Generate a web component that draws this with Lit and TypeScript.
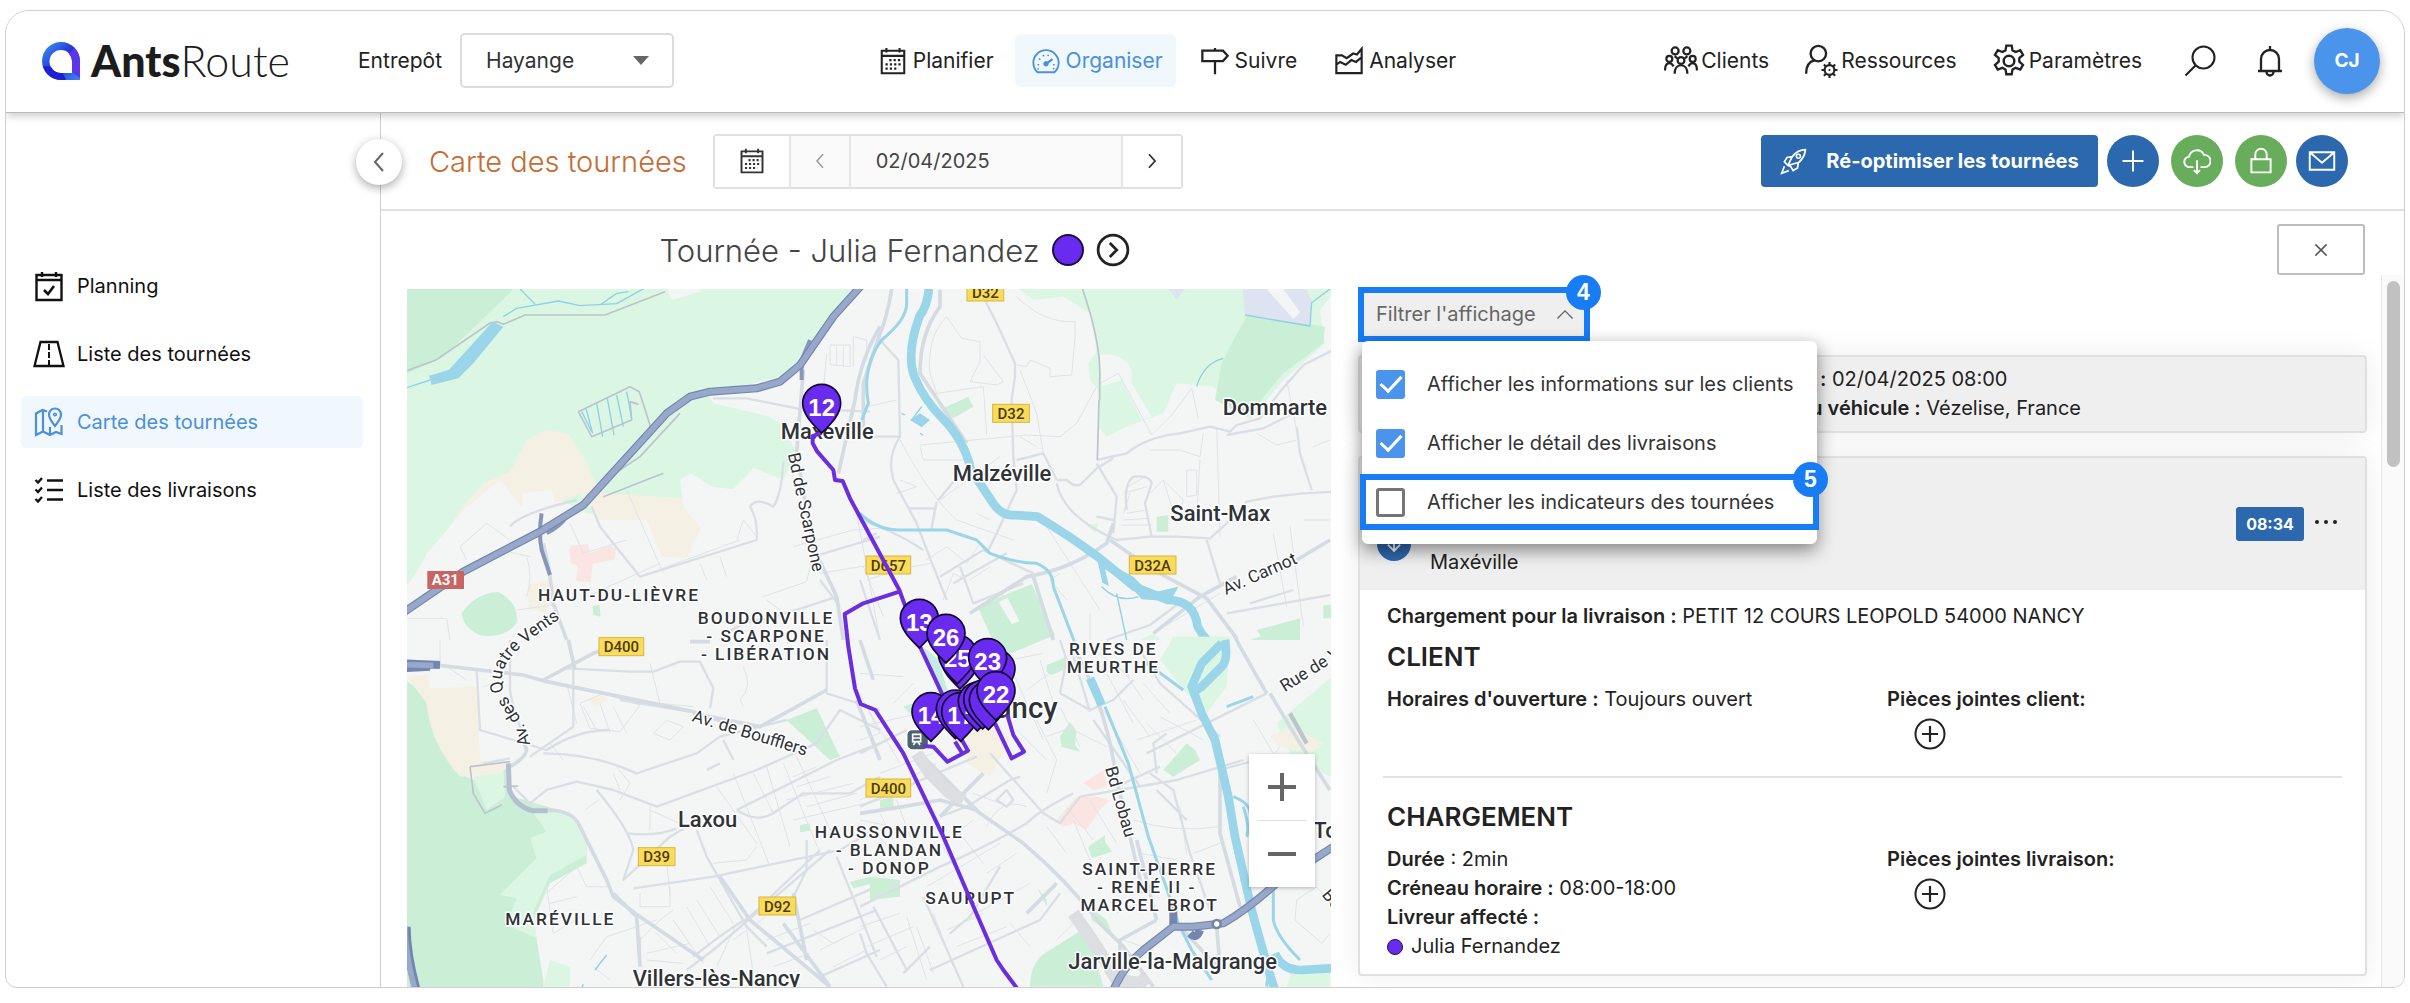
import { LitElement, html, svg, css } from "lit";
import { customElement, property } from "lit/decorators.js";

const ICONS: Record<string, unknown> = {
  calendar: svg`<path d="M4 5h24v24H4zM4 10.500h24M9 2v5M23 2v5" stroke-width="2.200"/><path d="M12 15h14M8 19.500h18M8 24h14" stroke-dasharray="2.400 2.200" stroke-width="2.400"/>`,
  gauge: svg`<path d="M7 28a13.500 13.500 0 1 1 18 0z" stroke-width="2"/><circle cx="16" cy="19" r="2.400" fill="currentColor"/><path d="M16 19l7-5" stroke-width="2.400"/><path d="M7 20h1.800M8.500 13.500l1.500 1M13 9.500l.6 1.500M18.500 9.300l-.4 1.500M23.500 20h1.800M6.800 24.500l1.600-.5M25 24.500l-1.600-.5" stroke-width="1.800"/>`,
  sign: svg`<path d="M16 2v3M16 16v14M2.500 5h22l5 5.500-5 5.500h-22z" stroke-width="2.400"/>`,
  chart: svg`<path d="M2.500 10v19h27V3l-5 6-4-1-7 5-5-3zM2.500 20l4-3 6 3 6-5 5 2 6-5" stroke-width="2.300"/>`,
  clients: svg`<g stroke-width="2.100"><circle cx="10.500" cy="6.500" r="3.300"/><circle cx="21.500" cy="6.500" r="3.300"/><circle cx="5" cy="14" r="2.800"/><circle cx="16" cy="15.500" r="3.200"/><circle cx="27" cy="14" r="2.800"/><path d="M1 25c0-4 1.500-7 4-7s3 1.500 4 3M23 21c1-1.500 1.500-3 4-3s4 3 4 7M10 28c0-5 2.500-8 6-8s6 3 6 8M10 11.500l2.500 2M22 11.500l-2.500 2"/></g>`,
  userGear: svg`<circle cx="13.500" cy="9" r="7.300" stroke-width="2.200"/><path d="M2 28c0-7 3-11.500 8-12.500" stroke-width="2.200"/><circle cx="24" cy="24.500" r="4.600" stroke-width="2"/><circle cx="24" cy="24.500" r="1" fill="currentColor" stroke="none"/><path d="M24 17v3M24 29v3M16.500 24.500h3M28.500 24.500h3M18.700 19.200l2.100 2.100M27.200 27.700l2.100 2.100M18.700 29.800l2.100-2.100M27.200 21.300l2.100-2.100" stroke-width="2"/>`,
  gear: svg`<circle cx="16" cy="16" r="5" stroke-width="2.300"/><path d="M13.500 1.500h5l.8 4.500 3 1.600 4.300-1.700 2.600 4.400-3.500 3v3.400l3.500 3-2.600 4.400-4.300-1.700-3 1.600-.8 4.500h-5l-.8-4.500-3-1.600-4.300 1.700-2.600-4.400 3.500-3v-3.400l-3.500-3 2.600-4.400L9.700 7.600l3-1.600z" stroke-width="2.200"/>`,
  search: svg`<circle cx="19.500" cy="12.500" r="11" stroke-width="2.100"/><path d="M11.500 20.500L1.500 30.500" stroke-width="2.200"/>`,
  bell: svg`<path d="M4 26h24M7 26V14a9 9 0 0 1 18 0v12M16 1v4M12.500 27a3.500 3.500 0 0 0 7 0" stroke-width="2.300"/>`,
  calCheck: svg`<path d="M3.500 5h25v25h-25zM3.500 10h25M9 2v5M23 2v5" stroke-width="2.400"/><path d="M11 20l4 4 6-8" stroke-width="2.600"/>`,
  road: svg`<path d="M7.500 4h17l6 24h-29z" stroke-width="2.300"/><path d="M16 6v6M16 14v6M16 22v5" stroke-width="2"/>`,
  map: svg`<path d="M14 5.500L9.500 4 3 7.500V29l7-3.500 7 3.500 6-3 5.500 2V19M10 5v20M17 21v8" stroke-width="2.200"/><path d="M22 20c-4-5-6-8-6-11.500a6 6 0 0 1 12 0C28 12 26 15 22 20z" stroke-width="2.200"/><circle cx="22" cy="8.500" r="1.300" stroke-width="1.600"/>`,
  checklist: svg`<path d="M14 6.500h16M14 16h16M14 25.500h16" stroke-width="2.400"/><path d="M2.500 6l2.500 2.500L9 4M2.500 15.500L5 18l4-4.500M2.500 25L5 27.500 9 23" stroke-width="2.300"/>`,
  left: svg`<path d="M20 7l-8 9 8 9" stroke-width="2"/>`,
  right: svg`<path d="M12 7l8 9-8 9" stroke-width="2.400"/>`,
  up: svg`<path d="M5 21L16 10l11 11" stroke-width="2"/>`,
  close: svg`<path d="M6 6l20 20M26 6L6 26" stroke-width="2.600"/>`,
  plus: svg`<path d="M16 4v24M4 16h24" stroke-width="2.200"/>`,
  rocket: svg`<path d="M9 21l-4-4 3-5 6-1c4-5 9-8 15-8-.5 6-3 11-8 15l-1 6-5 3-3-5zM14 11l-5 10M20 18L9 21M5 22l-3 8 8-3" stroke-width="2"/><circle cx="21" cy="10.500" r="2.300" stroke-width="1.800"/>`,
  cloud: svg`<path d="M12 23H8a6 6 0 0 1-1-12 9 9 0 0 1 17-2 7 7 0 0 1 1 14h-5M16 15v15M12.500 26.500L16 30l3.500-3.500" stroke-width="2.200"/>`,
  lock: svg`<path d="M5 14h22v15H5zM9.500 14V8.500a6.500 6.500 0 0 1 13 0V14" stroke-width="2.200"/>`,
  mail: svg`<path d="M2 6h28v20H2zM2 6l14 12L30 6" stroke-width="2.200"/>`,
  down: svg`<path d="M16 5v20M7 17l9 9 9-9" stroke-width="2.600"/>`,
  next: svg`<circle cx="16" cy="16" r="14" stroke-width="2.600"/><path d="M13 9.500l6.500 6.500-6.500 6.500" stroke-width="2.600"/>`,
  add: svg`<circle cx="16" cy="16" r="14.500" stroke-width="2"/><path d="M16 8v16M8 16h16" stroke-width="2.200"/>`,
};

@customElement("ar-icon")
export class ArIcon extends LitElement {
  @property() name = "plus";
  static styles = css`
    :host { display: inline-flex; width: 32px; height: 32px; flex: none; }
    .glyph { width: 100%; height: 100%; fill: none; stroke: currentColor; }
  `;
  render() {
    return html`<svg class="glyph" viewBox="0 0 32 32" aria-hidden="true">${ICONS[this.name]}</svg>`;
  }
}

interface Pin { x: number; y: number; n: string }

const PINS: Pin[] = [
  { x: 408, y: 86, n: "" }, { x: 300, y: 58, n: "" },
  { x: 292, y: 42, n: "25" }, { x: 178, y: -65, n: "13" }, { x: 258, y: -20, n: "26" }, { x: 383, y: 53, n: "23" },
  { x: 213, y: 215, n: "14" }, { x: 286, y: 207, n: "" }, { x: 302, y: 215, n: "17" },
  { x: 352, y: 184, n: "18" }, { x: 368, y: 178, n: "" }, { x: 385, y: 180, n: "" },
  { x: 408, y: 152, n: "22" },
];

const pin = (p: Pin) => svg`
  <path class="pin" d="M${p.x} ${p.y + 89}C${p.x - 16} ${p.y + 72} ${p.x - 57} ${p.y + 38} ${p.x - 57} ${p.y}a57 57 0 0 1 114 0C${p.x + 57} ${p.y + 38} ${p.x + 16} ${p.y + 72} ${p.x} ${p.y + 89}z"/>
  <text class="pinNo" x=${p.x} y=${p.y + 38}>${p.n}</text>`;

const shield = (x: number, y: number, t: string, w = 110) => svg`
  <rect class="shield" x=${x - w / 2} y=${y - 27} width=${w} height="54"/>
  <text class="road-no" x=${x} y=${y + 17}>${t}</text>`;

@customElement("tour-map")
export class TourMap extends LitElement {
  static styles = css`
    :host { display: block; position: relative; overflow: hidden; min-height: 0; background: #f4f5f5; }
    .canvas { position: absolute; inset: 0; width: 100%; height: 100%; font-family: Roboto, "Liberation Sans", sans-serif; }
    .g1 { fill: #dbf7e4; } .g2 { fill: #cbeed7; } .bare { fill: #f4f5f5; }
    .sand { fill: #f5f0e4; } .rose { fill: #fbe5e2; } .lilac { fill: #dde3f1; }
    .water { fill: #9ad5e9; }
    .w1, .w2, .w3, .r1, .r2, .r3, .grey, .hwo, .hw, .ramp, .way { fill: none; stroke-linejoin: round; }
    .w1 { stroke: #9ad5e9; stroke-width: 26; } .w2 { stroke: #9ad5e9; stroke-width: 9; } .w3 { stroke: #8fd0e6; stroke-width: 4; }
    .r1 { stroke: #d4dbe2; stroke-width: 11; } .r2 { stroke: #d9dfe4; stroke-width: 7; } .r3 { stroke: #dfe3e7; stroke-width: 3; }
    .grey { stroke: #bdc3cc; stroke-width: 5; }
    .hwo { stroke: #7486ad; stroke-width: 24; } .hw { stroke: #98a8cb; stroke-width: 17; }
    .ramp { stroke: #8797bb; stroke-width: 12; }
    .way { stroke: #6a2ee0; stroke-width: 12; }
    text { fill: #2f3338; stroke: #fff; stroke-width: 9; paint-order: stroke; stroke-linejoin: round; }
    .city { font-size: 66px; font-weight: 500; }
    .big { font-size: 88px; font-weight: 500; }
    .zone { font-size: 52px; font-weight: 500; letter-spacing: 6px; text-anchor: middle; }
    .street { font-size: 52px; }
    .shield { fill: #fadb5a; stroke: #d7b641; stroke-width: 3; }
    .road-no { font-size: 45px; font-weight: 500; text-anchor: middle; stroke: none; fill: #4a3d10; }
    .a31 { fill: #c96464; }
    .a31t { stroke: none; fill: #fff; font-size: 45px; font-weight: 700; text-anchor: middle; }
    .pin { fill: #6a2bf0; stroke: #12052e; stroke-width: 5; }
    .pinNo { font: 700 72px "Liberation Sans", Arial, sans-serif; fill: #fff; stroke: none; text-anchor: middle; }
    .rail { fill: #4d6372; stroke: #fff; stroke-width: 5; }
    .zoom { position: absolute; right: 16px; bottom: 100px; width: 66px; display: flex; flex-direction: column; align-items: center; background: #fff; box-shadow: 0 1px 4px #0004; }
    .zoom button { border: 0; background: none; width: 66px; height: 66px; padding: 0; color: #666; display: flex; align-items: center; justify-content: center; cursor: pointer; }
    .zoom svg { width: 28px; height: 28px; stroke: currentColor; stroke-width: 4; }
    .sep { width: 50px; height: 1px; background: #e2e2e2; }
  `;

  private northWest() {
    return svg`<g transform="translate(-7 -9) scale(0.33333)">
      <path class="g1" d="M0 0H1385L1190 250 1130 295 920 340 940 370 1110 410 1150 440 1190 520 1150 600 1060 565 1010 645 860 655 800 750 700 700 560 700 400 620 280 610 80 820 60 870 0 940z"/>
      <path class="g2" d="M0 0H370L130 230 0 290z"/>
      <path class="bare" d="M790 0H900V35L815 60z"/>
      <path class="sand" d="M0 970L180 690 250 610 330 575 380 480 440 450 505 460 555 540 600 640 860 655 1010 645 940 625 880 690 905 740 860 835 785 830 740 720 600 720 540 640 330 720 140 860 0 990z"/>
      <path class="bare" d="M300 600L365 680 370 640 455 630 470 690 330 740 200 860 0 1000V960L80 825 190 690z"/>
      <path class="bare" d="M840 600L875 580 935 620 1000 628 1060 565 1150 600 1060 680 900 740 850 680z"/>
      <path class="g2" d="M185 1000q40-60 110-64q60 30 56 90q-30 50-110 40q-50-20-56-66z"/>
      <path class="g2" d="M578 978l20-4 4 36-22-6z"/><path class="rose" d="M508 798l56-6 6 28 60-26 18 14-4 30-66 14-6 54-44-4 6-44-22-10z"/>
      <path class="sand" d="M384 915l62-16 10 60-20 40-50-16z"/>
      <g class="r3"><path d="M1290 195h60v65l-60-6zM1310 200v55M1330 200v60M1360 260v-90l40 10v60M1270 330l10-110M1180 800l180-50 80-5M1240 800l20 80 180-30M1370 700l70 380"/>
        <path d="M680 630l110 250M780 850L560 950M510 730l40 90 130-40M260 730l70 50M180 800l80-70M180 800l20 40M20 1015h120l10 65M380 830q20 60 0 120M300 810l90 20M720 890l300-110M900 850l20 50M960 830l20 60M1010 780l20-60 40 50M1090 950l130-45 30-130M1100 960l80 60M350 990l110-15"/></g>
      <g class="r2"><path d="M940 355h100l150 30 220 10M1150 545q-5 100-30 135-50-30-70 0 25 40 20 100L720 890 600 740 575 680M330 740q30-40 200-80M1440 770l-200 60M1260 900l60 80M960 1080q60-60 130-60l130-40M1220 980l90-30"/></g>
      <g class="r1"><path d="M1210 270l-20 250 50 280 70 150 20 130M1440 140q-60 100-75 220l-50 220M430 790q20 80 30 180l40 110"/></g>
      <g class="grey"><path d="M20 272l90-33 160-110 22-4 18 8 65-28h240l180-70M535 395l155-75 28 15 35 110M535 395l40 75 120-50-5-55 25 8M660 570l60-40 120-130M610 650l180-70"/></g>
      <path class="water" d="M278 125l32 15-90 110-45 45-80 20-8-28 60-18z"/>
      <g class="w3"><path d="M0 330l90-30M310 110l40-25 125-22 65 14 110-6 90-50M360 27l45 45M600 75l50-35 35-5"/><path d="M558 385l20 75M590 370l18 100M622 355l20 110M650 345l20 95M680 335l15 80M545 395l30 60"/></g>
      <path class="ramp" d="M425 700q-10 60 0 110l25 75M440 760q40-20 60-50M1205 300v-60l25-60"/>
      <path class="hwo" d="M0 1005l190-130 230-120 130-80L800 400l70-50 60-15 140-10 70-20 60-50L1300 110l90-100"/>
      <path class="hw" d="M0 1005l190-130 230-120 130-80L800 400l70-50 60-15 140-10 70-20 60-50L1300 110l90-100"/>
    </g>`;
  }

  private northEast() {
    return svg`<g transform="translate(453 -9) scale(0.33333)">
      <path class="g1" d="M440 0H1420V40L1380 90 1395 190 1270 300 1170 420 1060 320 950 310 910 400 800 440 740 470 715 440V330L690 300 685 250 710 215 690 100 610 50 520 60z"/>
      <path class="bare" d="M720 225q70-10 95 45v40l60 100-30 10-60-120-60 20z"/>
      <path class="g2" d="M1165 100l230 40-5 50-120 90-110 130-95-50 20-110 30-60z"/>
      <path class="lilac" d="M1145 0h180l30 60-5 78-195-35zM920 20h60l-30 40z"/><path class="bare" d="M1220 27h50l50 70-20 20z"/>
      <path class="g2" d="M250 385l75-35 15 30-60 35zM352 978l163-65 70 152-145 60-40-40zM890 710l35-5v50h-35zM1190 1050l130-35v65h-110zM1390 975h25v40h-25z"/>
      <path class="bare" d="M415 965l28-12 35 70-22 10z"/><path class="g1" d="M680 735l35-5-10 30zM840 1080l40-20 20 20z"/>
      <g class="r3"><path d="M260 110q-60 60-50 170l20 60 140-20 10 145M260 110l45 65 55 10v60l-30 60 80 10 20-10-60-80M470 50q80 80 175 75v50l-10 110-65 5v-25l-60-25-10 20-30-5M180 495l320-30 100 5 50-40 60-110M720 310l55-30 60 110 40 75 60-60 60-80 20 90M480 270l50 130 20 120M530 500l-50-30M870 510h90l60 20 10-70M870 640l40-40 60 60-20 70-40-130M980 570v80l30-5v-75z"/>
        <path d="M20 380l90-20M120 480q90 170 170 240l170 60M180 500l10 40h120M120 600l50 20-60 20M350 700l40 20M240 660l180-130M800 700l60-10M790 720l80-5M785 735l90 0M790 640l70-20M805 620l50-30M790 700l20-60M1070 440l10 330M1020 540l-10 170M1240 760l40 220M1290 740l40 300M1330 720h80M1360 500l50-20M1280 300l30 150M1190 460l60 35 60-15"/>
        <path d="M20 900l130-40M10 860l60 150M60 880l150-30M100 900l30 60M400 1000l40-80M620 960l-50-60 30-20M690 1000v80M880 1060l200-120M560 740l160 250M250 960l30-80 40 20M200 840l60-40 60 50 40-60M330 900l60-40"/></g>
      <g class="r2"><path d="M375 60l40 80 50 110v40l-10 70 5 170 10 100-60 130-30 60M60 180l55 60 5 230q-40 60-20 130l70 130 50 130 40 100M10 470h110M235 660l50-60M145 685h80l-10 60 15-80M590 600l30 0 20 15h20l50-50 50-30M590 610q20 100 180 170l100-10h80l100 5q60-50 110-110l80-15 90-10 100-5M710 540l90-20q60-50 160-60l90-20 60 15 20-20 70-20 60-80 70-80 100-50M1100 465l110-20 80-40M1040 780l40 130M1310 440l10 80 35 110M470 540l80-20 40 80M800 690q-10-80 20-100 50-5 55 20l-20 60 20 100M710 710l50 10M710 550l60 100-10 110"/>
        <path d="M10 780l40-20M0 720q100 30 190 90M240 890l130-80 150 70M0 900l60 180M280 910l160-90M300 860l40 110 150-60M1100 1000l310-55M1170 970l130-40M740 1080l130-45 80-60"/></g>
      <g class="r1"><path d="M240 30v50q-60 80-60 200l140 210M100 0q-20 120-40 160L10 310v150M330 1000l170-110q130-20 240-100l20-60M750 780l130 90 160 85 90 120M880 1060l140-110 110-60M1310 840l100-60M520 890l60 190"/></g>
      <path class="grey" d="M665 20q60 170 54 280v60M712 540l5-180"/>
      <path class="w1" d="M208 0q0 70-30 110-40 110-15 180 30 70 80 120 70 70 90 160l60 90q30 50 70 45l70 5q100 60 180 120l110 90 100 40q80 0 90 80 20 40 60 65"/>
      <path class="water" d="M710 830l110 60 50 50 85-20-20 38q-50 5-90 0-30-40-110-90l12 50-20-10z"/>
      <g class="w2"><path d="M140 0v70q0 50-75 110-60 80-40 190l-20 50M0 700q50 50 120 50l140 0 90 30 40 40q80 30 140 30 50 20 50 70l65 170"/></g>
      <g class="w3"><path d="M725 920q50 50 110 30M1010 320q20-70 80-85M1155 105l195 33 5-70 60-45M770 940l30 140M125 400l10 5M180 460l10 5M155 420l30-40"/></g>
      <path class="water" d="M150 420l30-20 30 20-25 22z"/>
    </g>`;
  }

  private southWest() {
    return svg`<g transform="translate(-7 351) scale(0.33333)">
      <path class="g2" d="M0 110l90 60 90 230 40 20 100-40 20 90 170 50 50 90v60l-110 60-50 110 30 180v30H0z"/>
      <path class="g1" d="M220 410l90-20 5 80-55 40zM400 520l110-5 50 90v40l-110 60-50 110 10 80-90-40 30-80-50-10 110-110-20-60 50-20zM430 1040l20-80 60 20v60z"/>
      <path class="sand" d="M20 110l90-10 120 40 10 220 90 15-30 25-120 10q-90-100-100-220z"/>
      <path class="g2" d="M1160 240l90-35 70 145-30 10zM1200 555l30-5v22l-30 5zM1350 725l60-15 10 20-60 15z"/>
      <path class="bare" d="M80 90l150 20v30l-140 5z"/><path class="sand" d="M565 180l40-15 20 15-40 20z"/>
      <g class="r3"><path d="M120 0v70M540 190l70-30 110 35-60 80-90-10zM550 200l40 70M600 190l30 90M640 200l40 80M760 280l40-40 50 20-40 40zM750 70l30 120 100 10M1030 80q30 60-10 100l10 20M250 140l30-10M500 130l30 120M450 310l40 50M650 380l40 50-30 50M555 510l40-30M640 400l20 50M950 440l120 170M1000 400l110 280M1060 400l60 120M1100 380l70 240M1150 370l110 270M1190 350l110 240M1180 410l70-30M1190 440l100-30M1160 480l200-50M1180 540l260-60M200 120l-60-40M1220 500l150-40"/>
        <path d="M440 760l90-80 30 60 60 0M450 790l80-20M440 740l20 140 100-60M570 960l50-70 150-50M580 980l50 40M720 900l60-60 40-30M740 940l130-30M740 960l110 10M770 880l60 60M820 840l90 130M860 800l70 120M890 780l70 110M930 740l70 110M720 760v40h90v-60M940 670l100-10 30-40M800 660l10 110M1000 900l40-30 20 130M950 980l60-130M1060 860l90-80M1100 900l130-50M1120 980l110-40M1240 870l60 40 100-50M1260 930l80-40M1300 980l100-50M750 500v70M750 510l110 50"/></g>
      <g class="r2"><path d="M230 90l10 180 200 60q90-60 190-60M520 80l0 180-130 90M330 0v150q10 70 50 160M500 85l190 10 70 0 80-30h60l40 80-10 60M590 450q100 120 110 180l-30 90 140-130 50-30M680 580q90 10 150-15M700 745l240-35 380-80 100-60M890 570l30 80 120 210 60 60M250 370l80-15M340 440l50 50 50-40 90-25 110 25 130 50 300-110 180-80 70-100 120 60M660 180l240 40M430 340q150 0 280 60l180-60 70-50 200-50M970 300l30 60M920 390l40-20M1010 510l300-150 130-50M1010 510q60 40 110 10l90-60h140l90-50M1280 0v160l160 50M880 950q100-80 170-120l210-200M1220 600v90l-40 80M1310 650l60 150 60 150M1200 840l230-100M1100 940l330-130M1260 1010l180-80M720 890l0 90M860 990l80-60 350-300"/></g>
      <g class="r1"><path d="M110 75l260 30 70 20 440 90 90 30M430 120l150-80 110-40M505 0l20 90M880 220l200 40 110-60 90-50M370 310q30 30-40 70M440 510q80 0 100 50l80 160 20 50q40 30 80 60l190 130M640 760l70 70 10 150M960 710l90 130 240 200M1150 850l140 190M1180 760l40 200M1370 180l70 180M870 5l60 0"/></g>
      <path class="grey" d="M210 380l10 80 35 60 50-25M210 380l120-15M310 440l45-2"/>
      <path d="M325 370l3 80q20 50 70 62l45 0" fill="none" stroke="#b4bfd0" stroke-width="15"/>
      <path class="hwo" d="M10 70l110 5M10 85l80-5M20 860q0 80 30 190"/><path class="hw" d="M10 74l90 2M15 860q0 80 30 190"/>
      <path class="w3" d="M585 990l35-45M545 1045l5-12"/>
    </g>`;
  }

  private southEast() {
    return svg`<g transform="translate(453 351) scale(0.33333)">
      <path class="g1" d="M900 60l40-70h170l-10 150-60 80-60-60-40-50zM1250 250l165-140v300l-110-40zM1280 1040l20-60 110-10v70z"/>
      <path class="g2" d="M560 75l55-22 10 30-50 22-15-10zM130 200l30-10v40zM600 290l30-45 20 30-5 40 15 20-55-15zM910 390l70-80 25 20 15 30-80 50zM685 620l50-35v20l20 30-60 20zM510 1040q0-80 60-110l110-70 50 180zM530 740l30 40v20zM60 480l40-10v40h-40zM30 710l90 10v50l-90 10zM1170 0l60-20 10 20zM690 800l50 40 15 40-60-40z"/>
      <path class="rose" d="M590 540l60-70h60l40 10-30 30-40 60-40-20-30 10zM670 430l60-40 10 50-40 10z"/>
      <path class="sand" d="M320 260l70-40 60 80-60 110-70-40zM1230 290l60-30 100 50-40 30-90-20z"/>
      <g class="r3"><path d="M0 100l130 10M0 300l60-20M0 260l180-40M20 330l60-30M20 200l100 170M0 160l60 120M60 400l160-60M80 450l150-80M130 330l90 200M160 130l-60 60M460 100l90 200M500 150l110-80M540 60l40 130M450 60l100-20M470 270l90 90M560 290l80-30M600 200l60 120M0 540l100 20M0 480l90-40M30 560l80 90M60 520l40 80M110 480l40 110M140 700l200-160M200 740l220-130M250 620l50 90M300 580l70 90M380 700l90-60M350 820l160-90M0 860l120-40M20 920l140-60M60 960l80-40M140 830l60 190M170 860l50 140M220 820l60 160M260 870l110-50M290 920l150-60M60 700l60 50M380 560q40-90 120-60M560 560l60 80M620 500l80 100M640 540l50 120M690 480l80 130M560 460l30-100-60-120"/>
        <path d="M730 210l110 190M700 240l80 110M620 260l120 60M830 300l180-60M860 250l90 90M790 180l80 110M740 100l80 150M790 90l60 90M850 130l80 90M690 20l120 90M960 500l20 140M820 540q120 40 260 20M840 640l110 20M1180 240l60 100M1200 400l60-80M770 820l90-40M790 900l90 30M1000 640l80-30M900 230l130 70M1310 780l60-40 40 50M1310 780l-5 60 80 70 25-30M1260 970l40 40M340 460l80 30M590 900l80-80M450 850l60 70"/></g>
      <g class="r2"><path d="M0 500l230-100 120-50M0 800l240-120q140-60 260-130 40-40 140-90M0 880l20 60 60 100M40 800l100 190M190 770l120 270M130 1000l80-80M420 680l-90 150-60 50M600 760l-60 80-330 150M0 340l140-70M240 530l80-30 130-80 30-10M390 340l160 180 50 30 60-80 290-50 200-60M700 240l140 200M860 340l360-180M870 400l70 50 50 190 60 170M890 450l90 90M1080 390l110-30M890 400l-10-90 40-30M770 440l130-60M600 160l20-100-20-60M600 160l90 50 70-30 60-60M690 215l-60-200M1080 290l-180-160-60-100M410 480l30-30 20 30-20 20z"/></g>
      <g class="r1"><path d="M0 0l40 120M190 350l170 170 130 90q130 110 230 240l70 70 90 120M0 520l130-20 110-20 110 30M240 530l130-130M1080 400l0 180 60 220M1220 160l-80-140-20-40M1230 160l90 150 90 140M830 600l60 240M640 20q100 180 130 400l80 340M780 1000l0-100 110-60M960 860l120 130M1070 860l10 120M590 730l-90 90"/></g>
      <path d="M1290 220l50 90" stroke="#bdc4cd" stroke-width="13"/>
      <path d="M170 340l40 60 60 60 40 20M640 820q80 110 130 200l70 10 20-20" fill="none" stroke="#dcdee1" stroke-width="38"/>
      <path class="w1" d="M1095 0q10 60-10 80l-60 60-30 20M1085 10l-60 60-30 70 30 80 40 80 40 170 20 120 50 220 50 180 20 60"/>
      <path class="w1" d="M1245 940q20 50 80 50l90-5"/>
      <path class="w1" d="M690 115l35 80"/>
      <g class="w2"><path d="M735 200l70 170 60 220 60 170 30 90 40 80 60 90M1120 470q50 20 50 50M1240 750l0 90q10 50 80 120M860 70l110 80M1100 200l80-30M1150 500q20 60 10 90M1230 950l-10 90"/></g>
      <path class="hwo" d="M760 1050q30-70 90-120l90-70h60l90-10q70-40 160-120l170-110M940 860v-60M990 880q20 20 30-10"/>
      <path class="hw" d="M760 1050q30-70 90-120l90-70h60l90-10q70-40 160-120l170-110"/>
      <circle cx="1070" cy="852" r="12" fill="#fff" stroke="#7486ad" stroke-width="8"/>
    </g>`;
  }

  private labels() {
    return svg`
    <g transform="translate(-7 -9) scale(0.33333)">
      <rect class="a31" x="82" y="873" width="110" height="54"/><text class="a31t" x="136" y="916">A31</text>
      <text class="zone" x="657" y="962">HAUT-DU-LIÈVRE</text>
      <text class="zone"><tspan x="1098" y="1031">BOUDONVILLE</tspan><tspan x="1098" y="1085">- SCARPONE</tspan><tspan x="1098" y="1139">- LIBÉRATION</tspan></text>
      <text class="city" x="1142" y="477">Maxéville</text>
      <text class="street" transform="translate(1163 522) rotate(78)">Bd de Scarpone</text>
    </g>
    <g transform="translate(453 -9) scale(0.33333)">
      ${shield(376, 36, "D32")}${shield(453, 400, "D32")}${shield(85, 855, "D657", 134)}${shield(878, 855, "D32A", 140)}
      <text class="city" x="278" y="603">Malzéville</text><text class="city" x="931" y="722">Saint-Max</text><text class="city" x="1088" y="405">Dommarte</text>
      <text class="street" transform="translate(1098 945) rotate(-24)">Av. Carnot</text>
    </g>
    <g transform="translate(-7 351) scale(0.33333)">
      ${shield(664, 20, "D400", 134)}${shield(770, 650, "D39")}${shield(1132, 798, "D92")}
      <text class="city" x="834" y="560">Laxou</text><text class="city" x="698" y="1037">Villers-lès-Nancy</text>
      <text class="zone" x="481" y="854">MARÉVILLE</text>
      <text class="street" transform="translate(874 243) rotate(17)">Av. de Boufflers</text>
      <path id="quatre" fill="none" d="M390 314C380 250 350 220 326 180C302 140 298 110 318 74C345 26 400 -10 500 -78"/>
      <text class="street"><textPath href="#quatre">Av. des Quatre Vents</textPath></text>
    </g>
    <g transform="translate(453 351) scale(0.33333)">
      ${shield(85, 444, "D400", 134)}
      <text class="zone"><tspan x="760" y="46">RIVES DE</tspan><tspan x="760" y="100">MEURTHE</tspan></text>
      <text class="zone"><tspan x="88" y="595">HAUSSONVILLE</tspan><tspan x="88" y="649">- BLANDAN</tspan><tspan x="88" y="703">- DONOP</tspan></text>
      <text class="zone" x="332" y="791">SAURUPT</text>
      <text class="zone"><tspan x="869" y="705">SAINT-PIERRE</tspan><tspan x="860" y="759">- RENÉ II -</tspan><tspan x="869" y="812">MARCEL BROT</tspan></text>
      <text class="city" x="625" y="987">Jarville-la-Malgrange</text><text class="city" x="1360" y="594">Tomblaine</text>
      <text class="big" x="345" y="235">Nancy</text>
      <text class="street" transform="translate(735 385) rotate(74)">Bd Lobau</text>
      <text class="street" transform="translate(1274 157) rotate(-32)">Rue de Vic</text>
      <text class="street" transform="translate(1384 765) rotate(50)">Bd</text>
      <rect class="rail" x="140" y="268" width="66" height="62" rx="16"/>
      <path d="M158 283h24v22h-24zM158 294h24M160 315l6-8M180 315l-6-8" fill="none" stroke="#fff" stroke-width="5"/>
    </g>`;
  }

  render() {
    return html`
      <svg class="canvas" viewBox="0 0 924 698" preserveAspectRatio="xMidYMid slice" role="img" aria-label="Carte de la tournée">
        ${this.northWest()}${this.northEast()}${this.southWest()}${this.southEast()}
        ${this.labels()}
        <g transform="translate(453 351) scale(0.33333)">
          <path d="M190 20l45 40 32 105-28-5z" fill="#c4ede0"/>
          <path class="way" d="M-115 -622L-142 -612-142 -590-128 -565-80 -510-75 -480-52 -477-30 -425 5 -360 118 -150 180 20 250 170 300 290 324 332 262 365 220 320 190 318M310 345l-25-40M118 -145L10 -110-46 -78-35 20-15 145 2 192 46 210 130 340 250 590 310 730 410 960 430 990 475 1050"/>
          <path class="way" d="M405 250l50 105 37-20-32-50-18-60"/>
          ${pin({ x: -115, y: -710, n: "12" })}
          ${PINS.map(pin)}
        </g>
      </svg>
      <div class="zoom">
        <button aria-label="Zoom avant"><svg viewBox="0 0 28 28"><path d="M14 0v28M0 14h28"/></svg></button>
        <span class="sep"></span>
        <button aria-label="Zoom arrière"><svg viewBox="0 0 28 28"><path d="M0 14h28"/></svg></button>
      </div>`;
  }
}

@customElement("app-root")
export class AppRoot extends LitElement {
  private nav = [
    { label: "Planifier", icon: "calendar", active: false },
    { label: "Organiser", icon: "gauge", active: true },
    { label: "Suivre", icon: "sign", active: false },
    { label: "Analyser", icon: "chart", active: false },
  ];
  private tools = [
    { label: "Clients", icon: "clients" },
    { label: "Ressources", icon: "userGear" },
    { label: "Paramètres", icon: "gear" },
  ];
  private side = [
    { label: "Planning", icon: "calCheck", active: false },
    { label: "Liste des tournées", icon: "road", active: false },
    { label: "Carte des tournées", icon: "map", active: true },
    { label: "Liste des livraisons", icon: "checklist", active: false },
  ];
  private filters = [
    { label: "Afficher les informations sur les clients", on: true, mark: false },
    { label: "Afficher le détail des livraisons", on: true, mark: false },
    { label: "Afficher les indicateurs des tournées", on: false, mark: true },
  ];

  static styles = css`
    :host { display: block; height: 100vh; padding: 10px 5px 15px; box-sizing: border-box; background: #fff; color: #222; font: 400 20px/29px Inter, "Liberation Sans", sans-serif; }
    * { box-sizing: border-box; }
    button, input, select { font: inherit; color: inherit; }
    button { cursor: pointer; padding: 0; }
    a { color: inherit; text-decoration: none; }
    h1, h2, h3, p { margin: 0; }
    .frame { height: 100%; border: 1px solid #cfcfcf; border-radius: 24px 24px 12px 12px; overflow: hidden; display: flex; flex-direction: column; }
    .top { flex: none; height: 102px; padding: 0 24px 2px 36px; display: flex; align-items: center; border-bottom: 1px solid #bbb; box-shadow: 0 3px 8px #0003; position: relative; z-index: 3; background: #fff; font-size: 21px; }
    .left { flex: 9 1 0; display: flex; align-items: center; }
    .brand { display: flex; align-items: center; gap: 11px; width: 316px; font: 300 43px/48px Lato, sans-serif; color: #1c1c1c; }
    .brand svg { width: 38px; height: 38px; }
    .brand b { font-weight: 900; }
    .depot { display: flex; align-items: center; gap: 18px; }
    .pick { display: grid; align-items: center; width: 214px; height: 55px; }
    .pick > * { grid-area: 1 / 1; }
    .pick select { appearance: none; width: 100%; height: 100%; padding: 0 24px; border: 2px solid #dcdcdc; border-radius: 5px; background: #fff; color: #333; }
    .caret { justify-self: end; margin-right: 25px; border: solid transparent; border-width: 9px 8px 0; border-top-color: #666; pointer-events: none; }
    .nav { display: flex; gap: 8px; }
    .nav a { height: 53px; padding: 0 13px 0 16px; display: flex; align-items: center; gap: 5px; border-radius: 6px; }
    .nav ar-icon { width: 30px; height: 30px; }
    .nav .on { color: #4a90dc; background: #f0f7fd; }
    .right { flex: 10 1 0; display: flex; align-items: center; justify-content: flex-end; }
    .tools { display: flex; gap: 35px; margin-right: 42px; }
    .tools a { display: flex; align-items: center; gap: 3px; }
    .ghost { border: 0; background: none; display: flex; margin-right: 38px; }
    .ghost.alerts { margin-right: 28px; }
    .tools ar-icon { width: 34px; height: 34px; }
    .avatar { width: 66px; height: 66px; border: 0; border-radius: 50%; background: #4a94ec; color: #fff; font-weight: 700; font-size: 19px; box-shadow: 0 4px 12px #0005; }
    .body { flex: 1; min-height: 0; display: flex; }
    .side { flex: none; width: 375px; border-right: 1px solid #cfcfcf; padding: 147px 17px 0 15px; position: relative; color: #111; }
    .side nav { display: flex; flex-direction: column; gap: 16px; }
    .side a { height: 52px; padding: 0 12px; display: flex; align-items: center; gap: 12px; border-radius: 6px; }
    .side .on { background: #f0f7fd; color: #4a90dc; }
    .fold { position: absolute; z-index: 2; right: -22px; top: 26px; width: 46px; height: 46px; border: 0; border-radius: 50%; background: #fff; color: #666; display: flex; align-items: center; justify-content: center; box-shadow: 0 3px 10px #0005; }
    .main { flex: 1; min-width: 0; display: flex; flex-direction: column; }
    .bar { flex: none; height: 98px; padding: 0 56px 0 48px; display: flex; align-items: center; border-bottom: 2px solid #e0e0e0; }
    .bar h1 { font-size: 29px; font-weight: 300; color: #c56b33; margin-right: 26px; white-space: nowrap; }
    .date { display: flex; width: 470px; height: 55px; border: 2px solid #e0e0e0; border-radius: 4px; }
    .date button { border: 0; border-right: 2px solid #e6e6e6; background: #fff; width: 76px; display: flex; align-items: center; justify-content: center; color: #333; }
    .date ar-icon { width: 28px; height: 28px; }
    .date .step { width: 60px; }
    .date .step ar-icon { width: 24px; height: 24px; }
    .date .step:disabled { background: #fafafa; color: #999; }
    .date .last { border-right: 0; border-left: 2px solid #e6e6e6; }
    .date input { flex: 1; min-width: 0; border: 0; background: #fafafa; padding: 0 25px; color: #444; }
    .acts { margin-left: auto; display: flex; align-items: center; gap: 9px; }
    .duo { display: flex; gap: 12px; }
    .cta { height: 52px; width: 337px; border: 0; border-radius: 4px; background: #2c68ad; color: #fff; font-weight: 700; display: flex; align-items: center; justify-content: center; gap: 18px; white-space: nowrap; }
    .round { width: 52px; height: 52px; border: 0; border-radius: 50%; color: #fff; background: #2c68ad; display: flex; align-items: center; justify-content: center; }
    .green { background: #67ad5b; }
    .round ar-icon, .cta ar-icon { width: 28px; height: 28px; }
    .split { flex: 1; min-height: 0; display: grid; grid-template-columns: minmax(0, 950fr) minmax(0, 1073fr); grid-template-rows: minmax(0, 1fr); }
    .mapcol { padding-left: 26px; display: flex; flex-direction: column; }
    .name { flex: none; height: 78px; padding-left: 51px; display: flex; align-items: center; justify-content: center; gap: 12px; color: #444; }
    .name h2 { font-size: 31px; font-weight: 300; }
    .disc { width: 32px; height: 32px; border-radius: 50%; background: #6a2bf0; border: 2px solid #1b1040; flex: none; }
    .name button { border: 0; background: none; color: #222; display: flex; }
    .name button ar-icon { width: 34px; height: 34px; }
    tour-map { flex: 1; }
    .info { display: flex; flex-direction: column; }
    .shut { flex: none; height: 64px; padding: 13px 39px 0 0; display: flex; justify-content: flex-end; align-items: flex-start; }
    .shut button { width: 88px; height: 51px; border: 2px solid #bdbdbd; border-radius: 3px; background: #fff; color: #555; display: flex; align-items: center; justify-content: center; }
    .shut ar-icon { width: 18px; height: 18px; }
    .pane { flex: 1; min-height: 0; display: grid; grid-template-columns: minmax(0, 1fr) 23px; }
    .scroll { overflow: hidden; padding: 12px 14px 0 27px; }
    .track { border-left: 1px solid #e6e6e6; background: #fafafa; padding: 6px 4px 0 5px; }
    .thumb { height: 186px; border-radius: 7px; background: #c1c1c1; }
    .filter { position: relative; z-index: 2; width: 232px; margin-bottom: 13px; }
    .filter .open { width: 100%; height: 55px; border: 6px solid #187cf5; background: #efefef; color: #666; display: flex; align-items: center; justify-content: space-between; padding: 0 8px 0 12px; white-space: nowrap; }
    .open ar-icon { width: 22px; height: 22px; }
    .num { position: absolute; width: 35px; height: 35px; border-radius: 50%; background: #187cf5; color: #fff; font: 700 23px/35px "Liberation Sans", Arial, sans-serif; text-align: center; right: -11px; top: -12px; z-index: 1; }
    .menu { position: absolute; left: 4px; top: 54px; width: 455px; height: 203px; padding-top: 15px; border-radius: 6px; background: #fff; box-shadow: 0 6px 18px #0007; display: flex; flex-direction: column; gap: 3px; }
    .menu label { position: relative; height: 56px; padding-left: 14px; display: flex; align-items: center; gap: 22px; white-space: nowrap; color: #333; }
    .mark::before { content: ""; position: absolute; inset: 0 -2px; border: 6px solid #187cf5; }
    .menu input { appearance: none; margin: 0; width: 29px; height: 29px; border: 3px solid #757575; border-radius: 3px; display: grid; place-items: center; background: #fff; }
    .menu input:checked { background: #4a94ec; border-color: #4a94ec; }
    .menu input:checked::after { content: ""; width: 9px; height: 18px; border: solid #fff; border-width: 0 3px 3px 0; transform: translateY(-3px) rotate(43deg); }
    .card { border: 2px solid #e0e0e0; border-radius: 4px; box-shadow: 0 0 30px #00000012; background: #fff; }
    .start { height: 78px; padding: 8px 0 0 367px; background: #efefef; margin-bottom: 23px; white-space: nowrap; }
    .head { height: 132px; background: #efefef; display: flex; align-items: center; padding: 0 28px 13px 17px; }
    .stop { height: 72px; align-self: flex-end; display: flex; align-items: flex-end; gap: 19px; flex: 1; }
    .stop .round { width: 34px; height: 34px; margin-bottom: 16px; }
    .stop .round ar-icon { width: 22px; height: 22px; }
    .time { margin-top: 12px; width: 68px; height: 34px; line-height: 34px; border-radius: 3px; background: #2c68ad; color: #fff; font-weight: 700; font-size: 16px; text-align: center; }
    .more { border: 0; background: none; margin: 8px 0 0 11px; display: flex; gap: 5px; }
    .more i { width: 4px; height: 4px; border-radius: 50%; background: #222; }
    .text { padding: 12px 23px 13px 27px; }
    .text h3 { font-size: 26px; line-height: 34px; font-weight: 600; margin: 9px 0 11px; }
    .cols { display: grid; grid-template-columns: 500fr 455fr; }
    .add { border: 0; background: none; display: flex; margin: 4px 0 0 27px; }
    .rule { border: 0; border-top: 2px solid #e2e2e2; margin: 26px 0 22px -4px; }
    b { font-weight: 600; }
    .who { display: flex; align-items: center; gap: 8px; }
    .dot { width: 16px; height: 16px; border-radius: 50%; background: #6a2bf0; border: 1px solid #1b1040; }
  `;

  render() {
    return html`
      <div class="frame">
        <header class="top">
          <div class="left">
            <div class="brand">
              <svg viewBox="0 0 38 38" aria-hidden="true">
                <defs>
                  <linearGradient id="lg" x1="0" y1="0" x2="1" y2="1"><stop offset="0" stop-color="#3ba0ee"/><stop offset=".5" stop-color="#2330d8"/><stop offset="1" stop-color="#3f86f0"/></linearGradient>
                </defs>
                <path fill="url(#lg)" fill-rule="evenodd" d="M19 0a19 19 0 0 1 19 19v19H19A19 19 0 0 1 19 0zM19 8a11.500 11.500 0 1 0 0 23h11V19A11 11 0 0 0 19 8z"/>
                <path fill="#1c1fd2" d="M1 24a19 19 0 0 0 18 14h5l-3-7h-2a11.500 11.500 0 0 1-10-6z"/><path fill="#5b37e8" d="M32 6a19 19 0 0 1 6 13v17l-8-6V19a11 11 0 0 0-3-7z"/>
              </svg>
              <span><b>Ants</b>Route</span>
            </div>
            <div class="depot">
              <label for="depot">Entrepôt</label>
              <div class="pick"><select id="depot"><option>Hayange</option></select><span class="caret"></span></div>
            </div>
          </div>
          <nav class="nav">
            ${this.nav.map((n) => html`<a href="#" class=${n.active ? "on" : ""}><ar-icon name=${n.icon}></ar-icon>${n.label}</a>`)}
          </nav>
          <div class="right">
            <nav class="tools">${this.tools.map((n) => html`<a href="#"><ar-icon name=${n.icon}></ar-icon>${n.label}</a>`)}</nav>
            <button class="ghost" aria-label="Rechercher"><ar-icon name="search"></ar-icon></button>
            <button class="ghost alerts" aria-label="Notifications"><ar-icon name="bell"></ar-icon></button>
            <button class="avatar">CJ</button>
          </div>
        </header>
        <div class="body">
          <aside class="side">
            <button class="fold" aria-label="Replier le menu"><ar-icon name="left"></ar-icon></button>
            <nav>${this.side.map((n) => html`<a href="#" class=${n.active ? "on" : ""}><ar-icon name=${n.icon}></ar-icon>${n.label}</a>`)}</nav>
          </aside>
          <main class="main">
            <div class="bar">
              <h1>Carte des tournées</h1>
              <div class="date">
                <button aria-label="Calendrier"><ar-icon name="calendar"></ar-icon></button>
                <button class="step" disabled aria-label="Jour précédent"><ar-icon name="left"></ar-icon></button>
                <input type="text" aria-label="Date" value="02/04/2025">
                <button class="step last" aria-label="Jour suivant"><ar-icon name="right"></ar-icon></button>
              </div>
              <div class="acts">
                <button class="cta"><ar-icon name="rocket"></ar-icon>Ré-optimiser les tournées</button>
                <div class="duo">
                  <button class="round" aria-label="Ajouter"><ar-icon name="plus"></ar-icon></button>
                  <button class="round green" aria-label="Télécharger"><ar-icon name="cloud"></ar-icon></button>
                  <button class="round green" aria-label="Verrouiller"><ar-icon name="lock"></ar-icon></button>
                </div>
                <button class="round" aria-label="Envoyer"><ar-icon name="mail"></ar-icon></button>
              </div>
            </div>
            <div class="split">
              <section class="mapcol">
                <div class="name">
                  <h2>Tournée - Julia Fernandez</h2><span class="disc"></span>
                  <button aria-label="Tournée suivante"><ar-icon name="next"></ar-icon></button>
                </div>
                <tour-map></tour-map>
              </section>
              <section class="info">
                <div class="shut"><button aria-label="Fermer"><ar-icon name="close"></ar-icon></button></div>
                <div class="pane">
                  <div class="scroll">
                    <div class="filter">
                      <button class="open" aria-expanded="true">Filtrer l'affichage<ar-icon name="up"></ar-icon></button>
                      <span class="num">4</span>
                      <div class="menu">
                        ${this.filters.map((f) => html`<label class=${f.mark ? "mark" : ""}><input type="checkbox" .checked=${f.on}>${f.label}${f.mark ? html`<span class="num">5</span>` : ""}</label>`)}
                      </div>
                    </div>
                    <div class="card start">
                      <p><b>Départ le :</b> 02/04/2025 08:00</p>
                      <p><b>Départ du véhicule :</b> Vézelise, France</p>
                    </div>
                    <article class="card">
                      <div class="head">
                        <div class="stop"><span class="round"><ar-icon name="down"></ar-icon></span><p>Maxéville</p></div>
                        <span class="time">08:34</span>
                        <button class="more" aria-label="Options"><i></i><i></i><i></i></button>
                      </div>
                      <div class="text">
                        <p><b>Chargement pour la livraison :</b> PETIT 12 COURS LEOPOLD 54000 NANCY</p>
                        <h3>CLIENT</h3>
                        <div class="cols">
                          <p><b>Horaires d'ouverture :</b> Toujours ouvert</p>
                          <div><b>Pièces jointes client:</b><button class="add" aria-label="Ajouter une pièce client"><ar-icon name="add"></ar-icon></button></div>
                        </div>
                        <hr class="rule">
                        <h3>CHARGEMENT</h3>
                        <div class="cols">
                          <div>
                            <p><b>Durée</b> : 2min</p>
                            <p><b>Créneau horaire :</b> 08:00-18:00</p>
                            <p><b>Livreur affecté :</b></p>
                            <p class="who"><span class="dot"></span>Julia Fernandez</p>
                          </div>
                          <div><b>Pièces jointes livraison:</b><button class="add" aria-label="Ajouter une pièce livraison"><ar-icon name="add"></ar-icon></button></div>
                        </div>
                      </div>
                    </article>
                  </div>
                  <div class="track"><div class="thumb"></div></div>
                </div>
              </section>
            </div>
          </main>
        </div>
      </div>`;
  }
}
